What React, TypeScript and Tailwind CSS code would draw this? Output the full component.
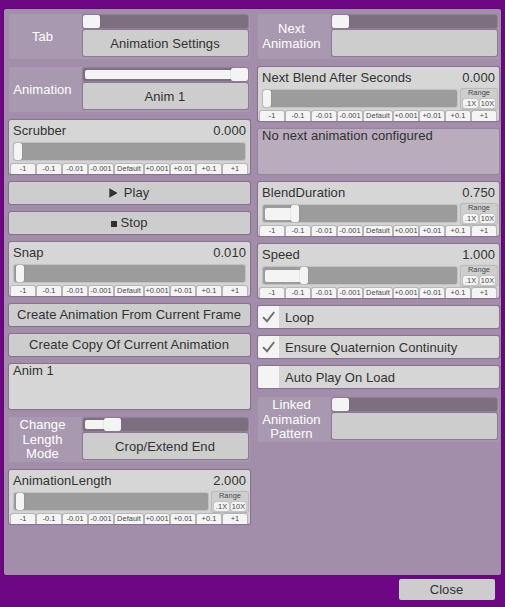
import React from "react";

const STEPS = ["-1", "-0.1", "-0.01", "-0.001", "Default", "+0.001", "+0.01", "+0.1", "+1"];

const EDGE = "shadow-[0_0_1px_0.5px_rgba(70,50,80,0.3)]";

function Track({
  offset,
  wide = false,
  fill = false,
}: {
  offset: number;
  wide?: boolean;
  fill?: boolean;
}) {
  return (
    <div
      className={
        wide
          ? "flex h-[13px] items-center rounded-[2px] bg-[#7d6f80] shadow-[0_0_1px_0.5px_rgba(70,50,80,0.25)]"
          : "flex h-[17px] grow items-center rounded-[2px] bg-[#9c9c9c] shadow-[0_0_1px_1px_rgba(70,70,70,0.15)]"
      }
    >
      <div className="flex h-full items-center" style={{ width: offset }}>
        {fill && (
          <div
            className={
              wide
                ? "ml-[2px] h-[9px] grow rounded-l-[2px] bg-[#f4f4f4]"
                : "ml-[2px] h-[12px] grow rounded-l-[2px] bg-[#f4f4f4]"
            }
          />
        )}
      </div>
      <div
        className={
          wide
            ? "h-[13px] w-[17px] rounded-[2px] bg-[#f4f4f4] shadow-[0_0_1px_rgba(60,60,60,0.6)]"
            : "h-[17px] w-[8px] rounded-[2px] bg-[#f4f4f4] shadow-[0_0_1px_rgba(60,60,60,0.6)]"
        }
      />
    </div>
  );
}

function Chooser({
  label,
  value,
  offset = 0,
  fill = false,
}: {
  label: string;
  value: string;
  offset?: number;
  fill?: boolean;
}) {
  return (
    <div className="flex h-[45px] rounded-[2px] bg-[#a999b0] pr-[2px]">
      <div className="flex w-[74px] items-center justify-center whitespace-pre pr-[7px] pt-[1px] text-center leading-[14.7px] text-white">
        {label}
      </div>
      <div className="flex w-[165px] flex-col gap-[2px] pt-[1px]">
        <Track wide offset={offset} fill={fill} />
        <div className={`flex h-[26px] items-center justify-center rounded-[2px] bg-[#cdcdcd] pr-[1px] ${EDGE}`}>
          {value}
        </div>
      </div>
    </div>
  );
}

function Range() {
  return (
    <div className="flex h-[20px] w-[36px] flex-col items-center rounded-[2px] bg-[#cecece] text-[7.4px] text-[#484848] shadow-[0_0_1px_1px_rgba(90,90,90,0.25)]">
      <div className="h-[10px] leading-[8px]">Range</div>
      <div className="flex gap-[2px]">
        {[".1X", "10X"].map((t) => (
          <div
            key={t}
            className="flex h-[9px] w-[15px] items-center justify-center rounded-[2px] bg-[#f4f4f4] leading-[9px] shadow-[0_0_1px_rgba(60,60,60,0.6)]"
          >
            {t}
          </div>
        ))}
      </div>
    </div>
  );
}

function SliderCard({
  label,
  value,
  offset,
  range = false,
  fill = false,
}: {
  label: string;
  value: string;
  offset: number;
  range?: boolean;
  fill?: boolean;
}) {
  return (
    <div className={`h-[54px] overflow-hidden rounded-[2px] bg-[#d6d6d6] ${EDGE}`}>
      <div className="flex h-[22px] items-center justify-between pb-[2px] pl-[4px] pr-[4px]">
        <span>{label}</span>
        <span>{value}</span>
      </div>
      <div className={range ? "flex h-[22px] gap-[4px] pl-[5px] pr-[2px]" : "flex h-[22px] pl-[5px] pr-[5px] pt-[1px]"}>
        <div className={range ? "flex grow pt-[1px]" : "flex grow"}>
          <Track offset={offset} fill={fill} />
        </div>
        {range && <Range />}
      </div>
      <div className="flex h-[10px] gap-[2px] pl-[2px] text-[7.4px] text-[#484848]">
        {STEPS.map((s) => (
          <div
            key={s}
            className={`flex shrink-0 items-center justify-center rounded-t-[2px] bg-[#f4f4f4] leading-[10px] shadow-[0_0_1px_1px_rgba(80,80,80,0.25)] ${
              s === "Default" ? "w-[28px]" : "w-[24px]"
            }`}
          >
            {s}
          </div>
        ))}
      </div>
    </div>
  );
}

function Button({ children }: { children: React.ReactNode }) {
  return (
    <div className={`flex h-[22px] items-center justify-center rounded-[2px] bg-[#cdcdcd] pb-[1px] pr-[1px] ${EDGE}`}>
      {children}
    </div>
  );
}

function Toggle({ label, on = false }: { label: string; on?: boolean }) {
  return (
    <div className={`flex h-[22px] items-center rounded-[2px] bg-[#d6d6d6] ${EDGE}`}>
      <div className="flex h-[22px] w-[21px] items-center justify-center rounded-l-[2px] bg-[#f4f4f4]">
        {on && (
          <svg width="15" height="14" viewBox="0 0 15 14" fill="none">
            <path d="M2 7.2 L6 11.2 L13.2 2" stroke="#707070" strokeWidth="1.9" />
          </svg>
        )}
      </div>
      <span className="pl-[6px]">{label}</span>
    </div>
  );
}

export default function App() {
  return (
    <div className="flex h-[607px] w-[505px] flex-col bg-[#6e0783] pl-[4px] pr-[4px] pt-[9px] font-['Liberation_Sans',Arial,sans-serif] text-[13px] leading-[15px] tracking-[0.06px] text-[#323232]">
      <div className="flex h-[566px] shrink-0 gap-[8px] rounded-[2px] bg-[#a28eaa] pl-[5px] pt-[5px] shadow-[0_0_1px_1px_rgba(70,20,90,0.4)]">
        <div className="flex w-[241px] flex-col gap-[8px]">
          <Chooser label="Tab" value="Animation Settings" />
          <Chooser label="Animation" value="Anim 1" offset={148} fill />
          <SliderCard label="Scrubber" value="0.000" offset={0} />
          <Button>
            <svg className="mr-[6px]" width="9" height="10" viewBox="0 0 9 10">
              <path d="M0.3 0.2 L8.6 5 L0.3 9.8 Z" fill="#323232" />
            </svg>
            Play
          </Button>
          <Button>
            <div className="mr-[4px] mt-[2px] h-[6px] w-[6px] bg-[#323232]" />
            Stop
          </Button>
          <SliderCard label="Snap" value="0.010" offset={1.5} />
          <Button>Create Animation From Current Frame</Button>
          <Button>Create Copy Of Current Animation</Button>
          <div className={`h-[45px] rounded-[2px] bg-[#d6d6d6] pl-[4px] leading-[13px] ${EDGE}`}>Anim 1</div>
          <Chooser label={"Change\nLength\nMode"} value="Crop/Extend End" offset={21} fill />
          <SliderCard label="AnimationLength" value="2.000" offset={2} range />
        </div>
        <div className="flex w-[241px] flex-col gap-[8px]">
          <Chooser label={"Next\nAnimation"} value="" />
          <SliderCard label="Next Blend After Seconds" value="0.000" offset={0} range />
          <div className="h-[45px] rounded-[2px] bg-[#b8acbd] pl-[4px] leading-[13px] shadow-[0_0_1px_1px_rgba(70,50,80,0.12)]">
            No next animation configured
          </div>
          <SliderCard label="BlendDuration" value="0.750" offset={28} range fill />
          <SliderCard label="Speed" value="1.000" offset={37} range fill />
          <Toggle label="Loop" on />
          <Toggle label="Ensure Quaternion Continuity" on />
          <Toggle label="Auto Play On Load" />
          <div className="pt-[1px]">
            <Chooser label={"Linked\nAnimation\nPattern"} value="" />
          </div>
        </div>
      </div>
      <div className="flex justify-end pr-[6px] pt-[4px]">
        <div className={`flex h-[21px] w-[96px] items-center justify-center rounded-[2px] bg-[#cdcdcd] pr-[1px] ${EDGE}`}>
          Close
        </div>
      </div>
    </div>
  );
}
